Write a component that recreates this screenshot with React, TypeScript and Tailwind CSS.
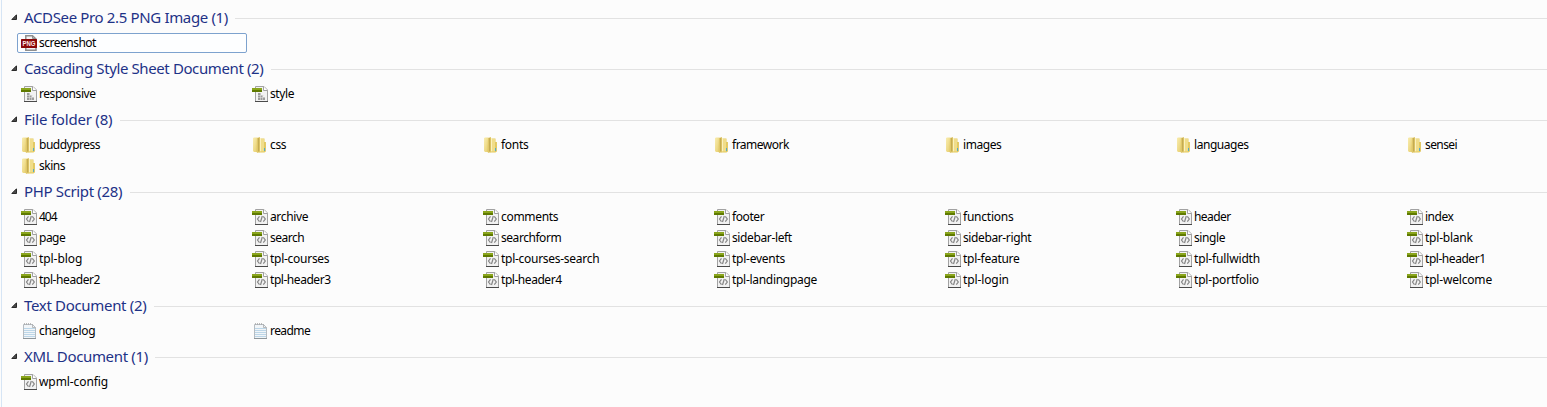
import React from "react";

type Kind = "png" | "css" | "folder" | "php" | "txt";

/** File name and how many pixels its label is condensed by. */
type Item = [name: string, condense: number];

interface Group {
  title: string;
  kind: Kind;
  titleClass: string;
  items: Item[];
}

const groups: Group[] = [
  {
    title: "ACDSee Pro 2.5 PNG Image (1)",
    kind: "png",
    titleClass: "w-[204px] tracking-[-0.35px]",
    items: [["screenshot", 5]],
  },
  {
    title: "Cascading Style Sheet Document (2)",
    kind: "css",
    titleClass: "w-[240px] tracking-[-0.39px]",
    items: [["responsive", 4.5], ["style", 2]],
  },
  {
    title: "File folder (8)",
    kind: "folder",
    titleClass: "w-[89px] tracking-[-0.2px]",
    items: [
      ["buddypress", 5], ["css", 1], ["fonts", 1.5], ["framework", 4.5], ["images", 2.5],
      ["languages", 4], ["sensei", 3.5], ["skins", 2.5],
    ],
  },
  {
    title: "PHP Script (28)",
    kind: "php",
    titleClass: "w-[99px] tracking-[-0.35px]",
    items: [
      ["404", 3], ["archive", 2.5], ["comments", 2.5], ["footer", 2.5], ["functions", 2], ["header", 3.5], ["index", 2.5],
      ["page", 2], ["search", 3], ["searchform", 4.5], ["sidebar-left", 4.5], ["sidebar-right", 5], ["single", 2.5], ["tpl-blank", 2],
      ["tpl-blog", 0.5], ["tpl-courses", 3], ["tpl-courses-search", 5], ["tpl-events", 2.5], ["tpl-feature", 3], ["tpl-fullwidth", 2], ["tpl-header1", 5],
      ["tpl-header2", 4.5], ["tpl-header3", 5], ["tpl-header4", 5], ["tpl-landingpage", 4.5], ["tpl-login", 1], ["tpl-portfolio", 2.5], ["tpl-welcome", 2],
    ],
  },
  {
    title: "Text Document (2)",
    kind: "txt",
    titleClass: "w-[123px] tracking-[-0.32px]",
    items: [["changelog", 3], ["readme", 3.5]],
  },
  {
    title: "XML Document (1)",
    kind: "php",
    titleClass: "w-[124px] tracking-[-0.34px]",
    items: [["wpml-config", 1]],
  },
];

function PageBase({ children }: { children: React.ReactNode }) {
  return (
    <svg className="size-4 shrink-0" viewBox="0 0 16 16" fill="none">
      <path d="M3.5 .5H12L15.5 4V15.5H3.5Z" fill="#f2f2f2" stroke="#a2a2a2" />
      <path d="M11.5 .5V4.5H15.5" fill="#fff" stroke="#a0a0a0" />
      <path d="M3 15.5H16" stroke="#4a4a4a" />
      {children}
      <rect y="2" width="10" height="2" fill="#8aa51c" />
      <rect y="4" width="10" height="2" fill="#5f7a00" />
    </svg>
  );
}

function FileIcon({ kind }: { kind: Kind }) {
  if (kind === "png")
    return (
      <svg className="size-4 shrink-0" viewBox="0 0 16 16" fill="none">
        <path d="M4.8 .8H11.5L15 4V15.2H4.8Z" fill="#f5f5f5" stroke="#8f8f8f" strokeWidth="1.5" />
        <path d="M11.5 1V3.5H14.5" stroke="#8f8f8f" />
        <rect y="4" width="16" height="9" rx=".5" fill="#8b0909" />
        <text
          x="8"
          y="11"
          textAnchor="middle"
          textLength="13"
          lengthAdjust="spacingAndGlyphs"
          className="fill-[#fbeaea] font-['Liberation_Sans',sans-serif] text-[7px] font-bold"
        >
          PNG
        </text>
      </svg>
    );
  if (kind === "folder")
    return (
      <svg className="size-4 shrink-0" viewBox="0 0 16 16" fill="none">
        <defs>
          <linearGradient id="folder-front" x1="0" y1="0" x2="1" y2="1">
            <stop stopColor="#f9edb0" />
            <stop offset="1" stopColor="#e6cd6c" />
          </linearGradient>
        </defs>
        <path d="M8 1.5H12.5V5H13.5V14.5L12.5 15.5H7Z" fill="#e3c95f" />
        <path d="M9 2H12V14.5H8Z" fill="#f0dd8a" />
        <path d="M1 1L2 .5H5.5V15H2L1 14Z" fill="url(#folder-front)" />
        <path d="M5 1L8 0V15L5.5 16L4.5 15Z" fill="#e0c768" />
        <path d="M6 1.3L7.2 .8V14L6 14.7Z" fill="#c4ab52" />
        <path d="M8 1H9V14L8 14.5Z" fill="#fbf1be" />
        <path d="M13.5 5V14.5" stroke="#e2c968" />
        <path d="M12.5 11V14" stroke="#55abc5" />
      </svg>
    );
  if (kind === "txt")
    return (
      <svg className="size-4 shrink-0" viewBox="0 0 16 16" fill="none">
        <path d="M2.5 1.5H11.5L14.5 4.5V15.5H2.5Z" fill="#f1f5f8" stroke="#b5bcc2" />
        <path d="M3 5.5H14M3 7.5H14M3 9.5H14M3 11.5H14M3 13.5H14" stroke="#bcd6e8" />
        <path d="M3.5 0V2M5.5 0V2M7.5 0V2M9.5 0V2M11.5 1V4.5H14.5" stroke="#aaa" strokeWidth=".8" />
        <path d="M2 15.5H15" stroke="#8d969b" />
      </svg>
    );
  if (kind === "css")
    return (
      <PageBase>
        <path d="M6 7H9V9H11V11H13V14H6Z" fill="#9c9c9c" />
        <path d="M6 9.5H12M6 11.5H13M8.5 7V14M10.5 9V14" stroke="#ddd" strokeWidth=".6" />
      </PageBase>
    );
  return (
    <PageBase>
      <path
        d="M7.5 7.3L5.5 10L7.5 12.7M11.3 7.3L13.3 10L11.3 12.7M10.3 7L8.5 13"
        stroke="#858585"
        strokeWidth="1.2"
      />
    </PageBase>
  );
}

export default function App() {
  return (
    <div className="flex h-[407px] w-full overflow-hidden bg-[#fcfcfc] pl-px font-['Noto_Sans','Open_Sans',sans-serif]">
      <main className="min-w-0 grow border-l border-[#d6e5f5] pt-[3px]">
        {groups.map((group) => (
          <section key={group.title}>
            <h2 className="flex h-[30px] items-center pl-[9px] text-[#1e3287]">
              <svg className="mr-[7px] mb-[2px] h-[6px] w-[6px] shrink-0" viewBox="0 0 6 6">
                <path d="M5.5 .8V5.5H.8Z" fill="#4a4a4a" stroke="#2a2a2a" />
              </svg>
              <span
                className={`mb-[2px] shrink-0 text-[15px] leading-5 font-normal whitespace-nowrap ${group.titleClass}`}
              >
                {group.title}
              </span>
              <span className="ml-[7px] h-px grow bg-[#e2e2e2]" />
            </h2>
            <ul className="grid grid-cols-[repeat(7,231px)] pl-[15px]">
              {group.items.map(([name, condense]) => (
                <li key={name} className="h-[21px] pr-px pb-px">
                  <div
                    className={`flex h-5 items-center gap-[2px] rounded-[2px] border pl-[3px] ${
                      group.kind === "png" ? "border-[#7da2ce] bg-[#fdfeff]" : "border-transparent"
                    }`}
                  >
                    <FileIcon kind={group.kind} />
                    <span
                      className="text-[12px] leading-4 whitespace-nowrap text-black"
                      style={{ letterSpacing: `${-condense / name.length}px` }}
                    >
                      {name}
                    </span>
                  </div>
                </li>
              ))}
            </ul>
          </section>
        ))}
      </main>
    </div>
  );
}
